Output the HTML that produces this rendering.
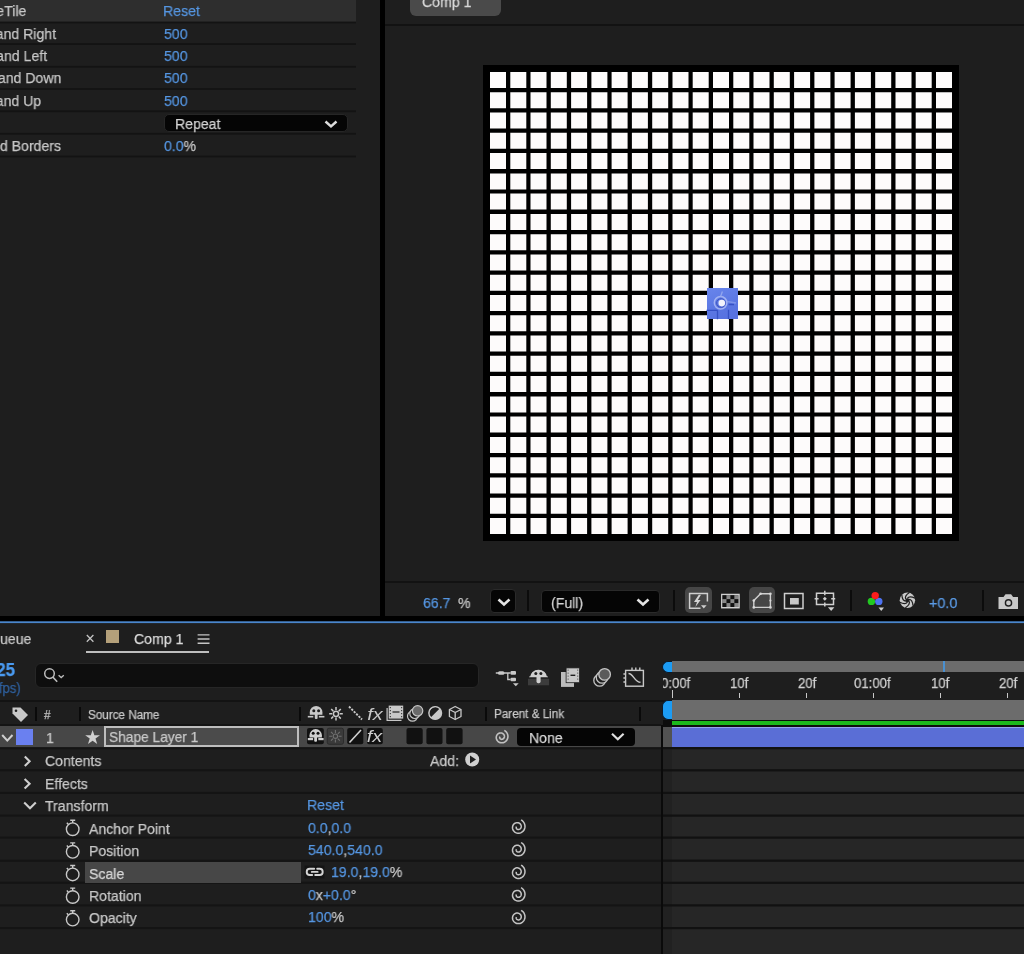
<!DOCTYPE html>
<html><head><meta charset="utf-8">
<style>
*{margin:0;padding:0;box-sizing:border-box}
html,body{width:1024px;height:954px;overflow:hidden;background:#1e1e1e;font-family:"Liberation Sans",sans-serif;color:#c8c8c8}
.a{position:absolute}
.t{position:absolute;white-space:nowrap;-webkit-text-stroke:0.25px currentColor;will-change:transform}
.b{color:#5596e2}
svg{position:absolute;overflow:visible}
</style></head><body>
<div class="a" style="left:0px;top:0px;width:356px;height:22px;background:#2e2e2e;"></div>
<svg style="left:0;top:0" width="1" height="1"><rect x="0" y="21.60" width="356" height="1.8" fill="#131313"/><rect x="0" y="43.20" width="356" height="1.8" fill="#131313"/><rect x="0" y="65.90" width="356" height="1.8" fill="#131313"/><rect x="0" y="88.10" width="356" height="1.8" fill="#131313"/><rect x="0" y="110.40" width="356" height="1.8" fill="#131313"/><rect x="0" y="132.90" width="356" height="1.8" fill="#131313"/><rect x="0" y="155.60" width="356" height="1.8" fill="#131313"/></svg>
<div class="t " style="top:3.40px;font-size:15px;line-height:15px;right:997.60px;transform-origin:100% 0;transform:scaleX(0.94);">CC RepeTile</div>
<div class="t " style="top:25.70px;font-size:15px;line-height:15px;right:968.00px;transform-origin:100% 0;transform:scaleX(0.94);">Expand Right</div>
<div class="t " style="top:47.70px;font-size:15px;line-height:15px;right:977.40px;transform-origin:100% 0;transform:scaleX(0.94);">Expand Left</div>
<div class="t " style="top:70.20px;font-size:15px;line-height:15px;right:962.90px;transform-origin:100% 0;transform:scaleX(0.94);">Expand Down</div>
<div class="t " style="top:92.70px;font-size:15px;line-height:15px;right:983.10px;transform-origin:100% 0;transform:scaleX(0.94);">Expand Up</div>
<div class="t " style="top:138.00px;font-size:15px;line-height:15px;right:962.90px;transform-origin:100% 0;transform:scaleX(0.94);">Blend Borders</div>
<div class="t " style="top:3.40px;font-size:15px;line-height:15px;left:163.30px;transform-origin:0 0;transform:scaleX(0.94);color:#5596e2;">Reset</div>
<div class="t " style="top:25.70px;font-size:15px;line-height:15px;left:164.00px;transform-origin:0 0;transform:scaleX(0.94);color:#5596e2;">500</div>
<div class="t " style="top:47.70px;font-size:15px;line-height:15px;left:164.00px;transform-origin:0 0;transform:scaleX(0.94);color:#5596e2;">500</div>
<div class="t " style="top:70.20px;font-size:15px;line-height:15px;left:164.00px;transform-origin:0 0;transform:scaleX(0.94);color:#5596e2;">500</div>
<div class="t " style="top:92.70px;font-size:15px;line-height:15px;left:164.00px;transform-origin:0 0;transform:scaleX(0.94);color:#5596e2;">500</div>
<div class="a" style="left:163.5px;top:113.7px;width:184.5px;height:18.6px;background:#050505;border:1px solid #262626;border-radius:5px"></div>
<div class="t " style="top:115.50px;font-size:15px;line-height:15px;left:174.80px;transform-origin:0 0;transform:scaleX(0.94);color:#d4d4d4;">Repeat</div>
<svg style="left:323.5px;top:119.5px" width="14" height="8"><path d="M1.5 1.5L7 6.5L12.5 1.5" fill="none" stroke="#dcdcdc" stroke-width="2.4"/></svg>
<div class="t " style="top:138.00px;font-size:15px;line-height:15px;left:164.00px;transform-origin:0 0;transform:scaleX(0.94);"><span class="b">0.0</span>%</div>
<div class="a" style="left:380px;top:0px;width:5px;height:617px;background:#000;"></div>
<div class="a" style="left:410px;top:-6px;width:91px;height:22px;background:#4a4a4a;border-radius:6px"></div>
<div class="t " style="top:-6.30px;font-size:15px;line-height:15px;left:421.70px;transform-origin:0 0;transform:scaleX(0.94);color:#d8d8d8;">Comp 1</div>
<div class="a" style="left:385px;top:24px;width:639px;height:2px;background:#121212;"></div>
<svg style="left:0;top:0" width="1024" height="954"><rect x="483" y="65" width="476" height="476" fill="#000"/><path fill="#fdfbfb" d="M490.0 72.0h16v16h-16zM510.3 72.0h16v16h-16zM530.5 72.0h16v16h-16zM550.8 72.0h16v16h-16zM571.1 72.0h16v16h-16zM591.4 72.0h16v16h-16zM611.6 72.0h16v16h-16zM631.9 72.0h16v16h-16zM652.2 72.0h16v16h-16zM672.5 72.0h16v16h-16zM692.7 72.0h16v16h-16zM713.0 72.0h16v16h-16zM733.3 72.0h16v16h-16zM753.5 72.0h16v16h-16zM773.8 72.0h16v16h-16zM794.1 72.0h16v16h-16zM814.4 72.0h16v16h-16zM834.6 72.0h16v16h-16zM854.9 72.0h16v16h-16zM875.2 72.0h16v16h-16zM895.5 72.0h16v16h-16zM915.7 72.0h16v16h-16zM936.0 72.0h16v16h-16zM490.0 92.3h16v16h-16zM510.3 92.3h16v16h-16zM530.5 92.3h16v16h-16zM550.8 92.3h16v16h-16zM571.1 92.3h16v16h-16zM591.4 92.3h16v16h-16zM611.6 92.3h16v16h-16zM631.9 92.3h16v16h-16zM652.2 92.3h16v16h-16zM672.5 92.3h16v16h-16zM692.7 92.3h16v16h-16zM713.0 92.3h16v16h-16zM733.3 92.3h16v16h-16zM753.5 92.3h16v16h-16zM773.8 92.3h16v16h-16zM794.1 92.3h16v16h-16zM814.4 92.3h16v16h-16zM834.6 92.3h16v16h-16zM854.9 92.3h16v16h-16zM875.2 92.3h16v16h-16zM895.5 92.3h16v16h-16zM915.7 92.3h16v16h-16zM936.0 92.3h16v16h-16zM490.0 112.5h16v16h-16zM510.3 112.5h16v16h-16zM530.5 112.5h16v16h-16zM550.8 112.5h16v16h-16zM571.1 112.5h16v16h-16zM591.4 112.5h16v16h-16zM611.6 112.5h16v16h-16zM631.9 112.5h16v16h-16zM652.2 112.5h16v16h-16zM672.5 112.5h16v16h-16zM692.7 112.5h16v16h-16zM713.0 112.5h16v16h-16zM733.3 112.5h16v16h-16zM753.5 112.5h16v16h-16zM773.8 112.5h16v16h-16zM794.1 112.5h16v16h-16zM814.4 112.5h16v16h-16zM834.6 112.5h16v16h-16zM854.9 112.5h16v16h-16zM875.2 112.5h16v16h-16zM895.5 112.5h16v16h-16zM915.7 112.5h16v16h-16zM936.0 112.5h16v16h-16zM490.0 132.8h16v16h-16zM510.3 132.8h16v16h-16zM530.5 132.8h16v16h-16zM550.8 132.8h16v16h-16zM571.1 132.8h16v16h-16zM591.4 132.8h16v16h-16zM611.6 132.8h16v16h-16zM631.9 132.8h16v16h-16zM652.2 132.8h16v16h-16zM672.5 132.8h16v16h-16zM692.7 132.8h16v16h-16zM713.0 132.8h16v16h-16zM733.3 132.8h16v16h-16zM753.5 132.8h16v16h-16zM773.8 132.8h16v16h-16zM794.1 132.8h16v16h-16zM814.4 132.8h16v16h-16zM834.6 132.8h16v16h-16zM854.9 132.8h16v16h-16zM875.2 132.8h16v16h-16zM895.5 132.8h16v16h-16zM915.7 132.8h16v16h-16zM936.0 132.8h16v16h-16zM490.0 153.1h16v16h-16zM510.3 153.1h16v16h-16zM530.5 153.1h16v16h-16zM550.8 153.1h16v16h-16zM571.1 153.1h16v16h-16zM591.4 153.1h16v16h-16zM611.6 153.1h16v16h-16zM631.9 153.1h16v16h-16zM652.2 153.1h16v16h-16zM672.5 153.1h16v16h-16zM692.7 153.1h16v16h-16zM713.0 153.1h16v16h-16zM733.3 153.1h16v16h-16zM753.5 153.1h16v16h-16zM773.8 153.1h16v16h-16zM794.1 153.1h16v16h-16zM814.4 153.1h16v16h-16zM834.6 153.1h16v16h-16zM854.9 153.1h16v16h-16zM875.2 153.1h16v16h-16zM895.5 153.1h16v16h-16zM915.7 153.1h16v16h-16zM936.0 153.1h16v16h-16zM490.0 173.4h16v16h-16zM510.3 173.4h16v16h-16zM530.5 173.4h16v16h-16zM550.8 173.4h16v16h-16zM571.1 173.4h16v16h-16zM591.4 173.4h16v16h-16zM611.6 173.4h16v16h-16zM631.9 173.4h16v16h-16zM652.2 173.4h16v16h-16zM672.5 173.4h16v16h-16zM692.7 173.4h16v16h-16zM713.0 173.4h16v16h-16zM733.3 173.4h16v16h-16zM753.5 173.4h16v16h-16zM773.8 173.4h16v16h-16zM794.1 173.4h16v16h-16zM814.4 173.4h16v16h-16zM834.6 173.4h16v16h-16zM854.9 173.4h16v16h-16zM875.2 173.4h16v16h-16zM895.5 173.4h16v16h-16zM915.7 173.4h16v16h-16zM936.0 173.4h16v16h-16zM490.0 193.6h16v16h-16zM510.3 193.6h16v16h-16zM530.5 193.6h16v16h-16zM550.8 193.6h16v16h-16zM571.1 193.6h16v16h-16zM591.4 193.6h16v16h-16zM611.6 193.6h16v16h-16zM631.9 193.6h16v16h-16zM652.2 193.6h16v16h-16zM672.5 193.6h16v16h-16zM692.7 193.6h16v16h-16zM713.0 193.6h16v16h-16zM733.3 193.6h16v16h-16zM753.5 193.6h16v16h-16zM773.8 193.6h16v16h-16zM794.1 193.6h16v16h-16zM814.4 193.6h16v16h-16zM834.6 193.6h16v16h-16zM854.9 193.6h16v16h-16zM875.2 193.6h16v16h-16zM895.5 193.6h16v16h-16zM915.7 193.6h16v16h-16zM936.0 193.6h16v16h-16zM490.0 213.9h16v16h-16zM510.3 213.9h16v16h-16zM530.5 213.9h16v16h-16zM550.8 213.9h16v16h-16zM571.1 213.9h16v16h-16zM591.4 213.9h16v16h-16zM611.6 213.9h16v16h-16zM631.9 213.9h16v16h-16zM652.2 213.9h16v16h-16zM672.5 213.9h16v16h-16zM692.7 213.9h16v16h-16zM713.0 213.9h16v16h-16zM733.3 213.9h16v16h-16zM753.5 213.9h16v16h-16zM773.8 213.9h16v16h-16zM794.1 213.9h16v16h-16zM814.4 213.9h16v16h-16zM834.6 213.9h16v16h-16zM854.9 213.9h16v16h-16zM875.2 213.9h16v16h-16zM895.5 213.9h16v16h-16zM915.7 213.9h16v16h-16zM936.0 213.9h16v16h-16zM490.0 234.2h16v16h-16zM510.3 234.2h16v16h-16zM530.5 234.2h16v16h-16zM550.8 234.2h16v16h-16zM571.1 234.2h16v16h-16zM591.4 234.2h16v16h-16zM611.6 234.2h16v16h-16zM631.9 234.2h16v16h-16zM652.2 234.2h16v16h-16zM672.5 234.2h16v16h-16zM692.7 234.2h16v16h-16zM713.0 234.2h16v16h-16zM733.3 234.2h16v16h-16zM753.5 234.2h16v16h-16zM773.8 234.2h16v16h-16zM794.1 234.2h16v16h-16zM814.4 234.2h16v16h-16zM834.6 234.2h16v16h-16zM854.9 234.2h16v16h-16zM875.2 234.2h16v16h-16zM895.5 234.2h16v16h-16zM915.7 234.2h16v16h-16zM936.0 234.2h16v16h-16zM490.0 254.5h16v16h-16zM510.3 254.5h16v16h-16zM530.5 254.5h16v16h-16zM550.8 254.5h16v16h-16zM571.1 254.5h16v16h-16zM591.4 254.5h16v16h-16zM611.6 254.5h16v16h-16zM631.9 254.5h16v16h-16zM652.2 254.5h16v16h-16zM672.5 254.5h16v16h-16zM692.7 254.5h16v16h-16zM713.0 254.5h16v16h-16zM733.3 254.5h16v16h-16zM753.5 254.5h16v16h-16zM773.8 254.5h16v16h-16zM794.1 254.5h16v16h-16zM814.4 254.5h16v16h-16zM834.6 254.5h16v16h-16zM854.9 254.5h16v16h-16zM875.2 254.5h16v16h-16zM895.5 254.5h16v16h-16zM915.7 254.5h16v16h-16zM936.0 254.5h16v16h-16zM490.0 274.7h16v16h-16zM510.3 274.7h16v16h-16zM530.5 274.7h16v16h-16zM550.8 274.7h16v16h-16zM571.1 274.7h16v16h-16zM591.4 274.7h16v16h-16zM611.6 274.7h16v16h-16zM631.9 274.7h16v16h-16zM652.2 274.7h16v16h-16zM672.5 274.7h16v16h-16zM692.7 274.7h16v16h-16zM713.0 274.7h16v16h-16zM733.3 274.7h16v16h-16zM753.5 274.7h16v16h-16zM773.8 274.7h16v16h-16zM794.1 274.7h16v16h-16zM814.4 274.7h16v16h-16zM834.6 274.7h16v16h-16zM854.9 274.7h16v16h-16zM875.2 274.7h16v16h-16zM895.5 274.7h16v16h-16zM915.7 274.7h16v16h-16zM936.0 274.7h16v16h-16zM490.0 295.0h16v16h-16zM510.3 295.0h16v16h-16zM530.5 295.0h16v16h-16zM550.8 295.0h16v16h-16zM571.1 295.0h16v16h-16zM591.4 295.0h16v16h-16zM611.6 295.0h16v16h-16zM631.9 295.0h16v16h-16zM652.2 295.0h16v16h-16zM672.5 295.0h16v16h-16zM692.7 295.0h16v16h-16zM713.0 295.0h16v16h-16zM733.3 295.0h16v16h-16zM753.5 295.0h16v16h-16zM773.8 295.0h16v16h-16zM794.1 295.0h16v16h-16zM814.4 295.0h16v16h-16zM834.6 295.0h16v16h-16zM854.9 295.0h16v16h-16zM875.2 295.0h16v16h-16zM895.5 295.0h16v16h-16zM915.7 295.0h16v16h-16zM936.0 295.0h16v16h-16zM490.0 315.3h16v16h-16zM510.3 315.3h16v16h-16zM530.5 315.3h16v16h-16zM550.8 315.3h16v16h-16zM571.1 315.3h16v16h-16zM591.4 315.3h16v16h-16zM611.6 315.3h16v16h-16zM631.9 315.3h16v16h-16zM652.2 315.3h16v16h-16zM672.5 315.3h16v16h-16zM692.7 315.3h16v16h-16zM713.0 315.3h16v16h-16zM733.3 315.3h16v16h-16zM753.5 315.3h16v16h-16zM773.8 315.3h16v16h-16zM794.1 315.3h16v16h-16zM814.4 315.3h16v16h-16zM834.6 315.3h16v16h-16zM854.9 315.3h16v16h-16zM875.2 315.3h16v16h-16zM895.5 315.3h16v16h-16zM915.7 315.3h16v16h-16zM936.0 315.3h16v16h-16zM490.0 335.5h16v16h-16zM510.3 335.5h16v16h-16zM530.5 335.5h16v16h-16zM550.8 335.5h16v16h-16zM571.1 335.5h16v16h-16zM591.4 335.5h16v16h-16zM611.6 335.5h16v16h-16zM631.9 335.5h16v16h-16zM652.2 335.5h16v16h-16zM672.5 335.5h16v16h-16zM692.7 335.5h16v16h-16zM713.0 335.5h16v16h-16zM733.3 335.5h16v16h-16zM753.5 335.5h16v16h-16zM773.8 335.5h16v16h-16zM794.1 335.5h16v16h-16zM814.4 335.5h16v16h-16zM834.6 335.5h16v16h-16zM854.9 335.5h16v16h-16zM875.2 335.5h16v16h-16zM895.5 335.5h16v16h-16zM915.7 335.5h16v16h-16zM936.0 335.5h16v16h-16zM490.0 355.8h16v16h-16zM510.3 355.8h16v16h-16zM530.5 355.8h16v16h-16zM550.8 355.8h16v16h-16zM571.1 355.8h16v16h-16zM591.4 355.8h16v16h-16zM611.6 355.8h16v16h-16zM631.9 355.8h16v16h-16zM652.2 355.8h16v16h-16zM672.5 355.8h16v16h-16zM692.7 355.8h16v16h-16zM713.0 355.8h16v16h-16zM733.3 355.8h16v16h-16zM753.5 355.8h16v16h-16zM773.8 355.8h16v16h-16zM794.1 355.8h16v16h-16zM814.4 355.8h16v16h-16zM834.6 355.8h16v16h-16zM854.9 355.8h16v16h-16zM875.2 355.8h16v16h-16zM895.5 355.8h16v16h-16zM915.7 355.8h16v16h-16zM936.0 355.8h16v16h-16zM490.0 376.1h16v16h-16zM510.3 376.1h16v16h-16zM530.5 376.1h16v16h-16zM550.8 376.1h16v16h-16zM571.1 376.1h16v16h-16zM591.4 376.1h16v16h-16zM611.6 376.1h16v16h-16zM631.9 376.1h16v16h-16zM652.2 376.1h16v16h-16zM672.5 376.1h16v16h-16zM692.7 376.1h16v16h-16zM713.0 376.1h16v16h-16zM733.3 376.1h16v16h-16zM753.5 376.1h16v16h-16zM773.8 376.1h16v16h-16zM794.1 376.1h16v16h-16zM814.4 376.1h16v16h-16zM834.6 376.1h16v16h-16zM854.9 376.1h16v16h-16zM875.2 376.1h16v16h-16zM895.5 376.1h16v16h-16zM915.7 376.1h16v16h-16zM936.0 376.1h16v16h-16zM490.0 396.4h16v16h-16zM510.3 396.4h16v16h-16zM530.5 396.4h16v16h-16zM550.8 396.4h16v16h-16zM571.1 396.4h16v16h-16zM591.4 396.4h16v16h-16zM611.6 396.4h16v16h-16zM631.9 396.4h16v16h-16zM652.2 396.4h16v16h-16zM672.5 396.4h16v16h-16zM692.7 396.4h16v16h-16zM713.0 396.4h16v16h-16zM733.3 396.4h16v16h-16zM753.5 396.4h16v16h-16zM773.8 396.4h16v16h-16zM794.1 396.4h16v16h-16zM814.4 396.4h16v16h-16zM834.6 396.4h16v16h-16zM854.9 396.4h16v16h-16zM875.2 396.4h16v16h-16zM895.5 396.4h16v16h-16zM915.7 396.4h16v16h-16zM936.0 396.4h16v16h-16zM490.0 416.6h16v16h-16zM510.3 416.6h16v16h-16zM530.5 416.6h16v16h-16zM550.8 416.6h16v16h-16zM571.1 416.6h16v16h-16zM591.4 416.6h16v16h-16zM611.6 416.6h16v16h-16zM631.9 416.6h16v16h-16zM652.2 416.6h16v16h-16zM672.5 416.6h16v16h-16zM692.7 416.6h16v16h-16zM713.0 416.6h16v16h-16zM733.3 416.6h16v16h-16zM753.5 416.6h16v16h-16zM773.8 416.6h16v16h-16zM794.1 416.6h16v16h-16zM814.4 416.6h16v16h-16zM834.6 416.6h16v16h-16zM854.9 416.6h16v16h-16zM875.2 416.6h16v16h-16zM895.5 416.6h16v16h-16zM915.7 416.6h16v16h-16zM936.0 416.6h16v16h-16zM490.0 436.9h16v16h-16zM510.3 436.9h16v16h-16zM530.5 436.9h16v16h-16zM550.8 436.9h16v16h-16zM571.1 436.9h16v16h-16zM591.4 436.9h16v16h-16zM611.6 436.9h16v16h-16zM631.9 436.9h16v16h-16zM652.2 436.9h16v16h-16zM672.5 436.9h16v16h-16zM692.7 436.9h16v16h-16zM713.0 436.9h16v16h-16zM733.3 436.9h16v16h-16zM753.5 436.9h16v16h-16zM773.8 436.9h16v16h-16zM794.1 436.9h16v16h-16zM814.4 436.9h16v16h-16zM834.6 436.9h16v16h-16zM854.9 436.9h16v16h-16zM875.2 436.9h16v16h-16zM895.5 436.9h16v16h-16zM915.7 436.9h16v16h-16zM936.0 436.9h16v16h-16zM490.0 457.2h16v16h-16zM510.3 457.2h16v16h-16zM530.5 457.2h16v16h-16zM550.8 457.2h16v16h-16zM571.1 457.2h16v16h-16zM591.4 457.2h16v16h-16zM611.6 457.2h16v16h-16zM631.9 457.2h16v16h-16zM652.2 457.2h16v16h-16zM672.5 457.2h16v16h-16zM692.7 457.2h16v16h-16zM713.0 457.2h16v16h-16zM733.3 457.2h16v16h-16zM753.5 457.2h16v16h-16zM773.8 457.2h16v16h-16zM794.1 457.2h16v16h-16zM814.4 457.2h16v16h-16zM834.6 457.2h16v16h-16zM854.9 457.2h16v16h-16zM875.2 457.2h16v16h-16zM895.5 457.2h16v16h-16zM915.7 457.2h16v16h-16zM936.0 457.2h16v16h-16zM490.0 477.5h16v16h-16zM510.3 477.5h16v16h-16zM530.5 477.5h16v16h-16zM550.8 477.5h16v16h-16zM571.1 477.5h16v16h-16zM591.4 477.5h16v16h-16zM611.6 477.5h16v16h-16zM631.9 477.5h16v16h-16zM652.2 477.5h16v16h-16zM672.5 477.5h16v16h-16zM692.7 477.5h16v16h-16zM713.0 477.5h16v16h-16zM733.3 477.5h16v16h-16zM753.5 477.5h16v16h-16zM773.8 477.5h16v16h-16zM794.1 477.5h16v16h-16zM814.4 477.5h16v16h-16zM834.6 477.5h16v16h-16zM854.9 477.5h16v16h-16zM875.2 477.5h16v16h-16zM895.5 477.5h16v16h-16zM915.7 477.5h16v16h-16zM936.0 477.5h16v16h-16zM490.0 497.7h16v16h-16zM510.3 497.7h16v16h-16zM530.5 497.7h16v16h-16zM550.8 497.7h16v16h-16zM571.1 497.7h16v16h-16zM591.4 497.7h16v16h-16zM611.6 497.7h16v16h-16zM631.9 497.7h16v16h-16zM652.2 497.7h16v16h-16zM672.5 497.7h16v16h-16zM692.7 497.7h16v16h-16zM713.0 497.7h16v16h-16zM733.3 497.7h16v16h-16zM753.5 497.7h16v16h-16zM773.8 497.7h16v16h-16zM794.1 497.7h16v16h-16zM814.4 497.7h16v16h-16zM834.6 497.7h16v16h-16zM854.9 497.7h16v16h-16zM875.2 497.7h16v16h-16zM895.5 497.7h16v16h-16zM915.7 497.7h16v16h-16zM936.0 497.7h16v16h-16zM490.0 518.0h16v16h-16zM510.3 518.0h16v16h-16zM530.5 518.0h16v16h-16zM550.8 518.0h16v16h-16zM571.1 518.0h16v16h-16zM591.4 518.0h16v16h-16zM611.6 518.0h16v16h-16zM631.9 518.0h16v16h-16zM652.2 518.0h16v16h-16zM672.5 518.0h16v16h-16zM692.7 518.0h16v16h-16zM713.0 518.0h16v16h-16zM733.3 518.0h16v16h-16zM753.5 518.0h16v16h-16zM773.8 518.0h16v16h-16zM794.1 518.0h16v16h-16zM814.4 518.0h16v16h-16zM834.6 518.0h16v16h-16zM854.9 518.0h16v16h-16zM875.2 518.0h16v16h-16zM895.5 518.0h16v16h-16zM915.7 518.0h16v16h-16zM936.0 518.0h16v16h-16z"/></svg>
<div class="a" style="left:706.5px;top:288.3px;width:31.1px;height:30.9px;background:linear-gradient(160deg,#6885ec,#5a76e2 60%,#5670e0);"></div>
<div class="a" style="left:385px;top:581px;width:639px;height:2px;background:#121212;"></div>
<div class="a" style="left:0px;top:616px;width:1024px;height:6px;background:#000;"></div>
<svg style="left:0;top:0" width="1" height="1"><rect x="0" y="621.3" width="1024" height="1.8" fill="#4a86cc"/></svg>
<div class="t " style="top:594.90px;font-size:15px;line-height:15px;left:423.00px;transform-origin:0 0;transform:scaleX(0.94);color:#5596e2;">66.7</div>
<div class="t " style="top:594.90px;font-size:15px;line-height:15px;left:457.50px;transform-origin:0 0;transform:scaleX(0.94);">%</div>
<div class="a" style="left:490px;top:589px;width:26px;height:24px;background:#050505;border:1px solid #2a2a2a;border-radius:4px"></div>
<svg style="left:496.5px;top:597.5px" width="14" height="8"><path d="M1.5 1.5L7 6.5L12.5 1.5" fill="none" stroke="#e4e4e4" stroke-width="2.6"/></svg>
<div class="a" style="left:527px;top:590px;width:2px;height:21px;background:#0c0c0c;"></div>
<div class="a" style="left:541px;top:589.5px;width:119px;height:23.5px;background:#050505;border:1px solid #2a2a2a;border-radius:4px"></div>
<div class="t " style="top:594.60px;font-size:15px;line-height:15px;left:551.00px;transform-origin:0 0;transform:scaleX(0.94);color:#d4d4d4;">(Full)</div>
<svg style="left:636px;top:597.5px" width="14" height="8"><path d="M1.5 1.5L7 6.5L12.5 1.5" fill="none" stroke="#e4e4e4" stroke-width="2.6"/></svg>
<div class="a" style="left:673px;top:590px;width:2px;height:21px;background:#0c0c0c;"></div>
<div class="a" style="left:685.4px;top:587.4px;width:26.4px;height:26px;background:#464646;border-radius:5px"></div>
<div class="a" style="left:749.4px;top:587.4px;width:25.4px;height:26px;background:#464646;border-radius:5px"></div>
<div class="a" style="left:850px;top:590px;width:2px;height:21px;background:#0c0c0c;"></div>
<div class="t " style="top:594.90px;font-size:15px;line-height:15px;left:929.00px;transform-origin:0 0;transform:scaleX(0.96);color:#5b9be6;">+0.0</div>
<div class="a" style="left:982px;top:590px;width:2px;height:21px;background:#0c0c0c;"></div>
<div class="t " style="top:631.30px;font-size:15px;line-height:15px;right:992.60px;transform-origin:100% 0;transform:scaleX(0.94);">Render Queue</div>
<div class="t " style="top:631.30px;font-size:15px;line-height:15px;left:133.60px;transform-origin:0 0;transform:scaleX(0.94);color:#dadada;">Comp 1</div>
<div class="a" style="left:105.7px;top:630px;width:13.5px;height:13px;background:#b4a07a;"></div>
<div class="a" style="left:86px;top:651px;width:123px;height:2px;background:#bebebe;"></div>
<div class="t " style="top:660.96px;font-size:18px;line-height:18px;right:1008.50px;transform-origin:100% 0;transform:scaleX(0.94);color:#4a9af0;font-weight:bold;">0:00:01:25</div>
<div class="t " style="top:680.75px;font-size:14px;line-height:14px;right:1003.50px;transform-origin:100% 0;transform:scaleX(0.94);color:#2f609e;">00025 (25.00 fps)</div>
<div class="a" style="left:35.4px;top:663.2px;width:443.2px;height:24.8px;background:#0e0e0e;border:1px solid #262626;border-radius:6px"></div>
<div class="a" style="left:0px;top:699.5px;width:1024px;height:2px;background:#131313;"></div>
<div class="a" style="left:35px;top:707px;width:2px;height:13.5px;background:#0a0a0a;"></div>
<div class="a" style="left:79px;top:707px;width:2px;height:13.5px;background:#0a0a0a;"></div>
<div class="a" style="left:299.3px;top:707px;width:2px;height:13.5px;background:#0a0a0a;"></div>
<div class="a" style="left:484.6px;top:707px;width:2px;height:13.5px;background:#0a0a0a;"></div>
<div class="a" style="left:639px;top:707px;width:2px;height:13.5px;background:#0a0a0a;"></div>
<div class="t " style="top:708.59px;font-size:12.3px;line-height:12.3px;left:43.70px;transform-origin:0 0;transform:scaleX(0.95);">#</div>
<div class="t " style="top:708.59px;font-size:12.3px;line-height:12.3px;left:87.50px;transform-origin:0 0;transform:scaleX(0.95);">Source Name</div>
<div class="t " style="top:708.39px;font-size:12.3px;line-height:12.3px;left:493.80px;transform-origin:0 0;transform:scaleX(0.95);">Parent &amp; Link</div>
<div class="a" style="left:0px;top:726px;width:661px;height:21.5px;background:#474747;"></div>
<div class="a" style="left:16.4px;top:728.5px;width:16.7px;height:16.7px;background:#6a80f0;"></div>
<div class="t " style="top:729.60px;font-size:15px;line-height:15px;left:45.70px;transform-origin:0 0;transform:scaleX(0.94);">1</div>
<div class="a" style="left:104.3px;top:726.3px;width:195px;height:21px;background:#4b4b4b;border:2px solid #bdbdbd"></div>
<div class="t " style="top:729.20px;font-size:15px;line-height:15px;left:108.60px;transform-origin:0 0;transform:scaleX(0.915);">Shape Layer 1</div>
<div class="a" style="left:516.9px;top:727.8px;width:118px;height:18.5px;background:#050505;border-radius:4px"></div>
<div class="t " style="top:730.20px;font-size:15px;line-height:15px;left:528.60px;transform-origin:0 0;transform:scaleX(0.94);color:#d8d8d8;">None</div>
<svg style="left:0;top:0" width="1" height="1"><rect x="0" y="747.10" width="1024" height="2.2" fill="#141414"/><rect x="0" y="769.20" width="1024" height="2.2" fill="#141414"/><rect x="0" y="791.80" width="1024" height="2.2" fill="#141414"/><rect x="0" y="814.50" width="1024" height="2.2" fill="#141414"/><rect x="0" y="836.50" width="1024" height="2.2" fill="#141414"/><rect x="0" y="859.60" width="1024" height="2.2" fill="#141414"/><rect x="0" y="881.70" width="1024" height="2.2" fill="#141414"/><rect x="0" y="904.30" width="1024" height="2.2" fill="#141414"/><rect x="0" y="927.00" width="1024" height="2.2" fill="#141414"/></svg>
<div class="a" style="left:84.7px;top:861.5px;width:216.3px;height:21.2px;background:#474747;"></div>
<div class="t " style="top:753.30px;font-size:15px;line-height:15px;left:45.40px;transform-origin:0 0;transform:scaleX(0.94);">Contents</div>
<div class="t " style="top:775.90px;font-size:15px;line-height:15px;left:45.40px;transform-origin:0 0;transform:scaleX(0.94);">Effects</div>
<div class="t " style="top:798.20px;font-size:15px;line-height:15px;left:45.40px;transform-origin:0 0;transform:scaleX(0.94);">Transform</div>
<div class="t " style="top:820.90px;font-size:15px;line-height:15px;left:88.60px;transform-origin:0 0;transform:scaleX(0.94);">Anchor Point</div>
<div class="t " style="top:843.20px;font-size:15px;line-height:15px;left:88.60px;transform-origin:0 0;transform:scaleX(0.94);">Position</div>
<div class="t " style="top:865.60px;font-size:15px;line-height:15px;left:88.60px;transform-origin:0 0;transform:scaleX(0.94);color:#d8d8d8;">Scale</div>
<div class="t " style="top:888.00px;font-size:15px;line-height:15px;left:88.60px;transform-origin:0 0;transform:scaleX(0.94);">Rotation</div>
<div class="t " style="top:910.40px;font-size:15px;line-height:15px;left:88.60px;transform-origin:0 0;transform:scaleX(0.94);">Opacity</div>
<div class="t " style="top:753.30px;font-size:15px;line-height:15px;left:430.40px;transform-origin:0 0;transform:scaleX(0.94);">Add:</div>
<div class="t " style="top:797.10px;font-size:15px;line-height:15px;left:307.30px;transform-origin:0 0;transform:scaleX(0.94);color:#5596e2;">Reset</div>
<div class="t " style="top:819.60px;font-size:15px;line-height:15px;left:307.80px;transform-origin:0 0;transform:scaleX(0.94);"><span class="b">0.0</span>,<span class="b">0.0</span></div>
<div class="t " style="top:842.00px;font-size:15px;line-height:15px;left:307.80px;transform-origin:0 0;transform:scaleX(0.94);"><span class="b">540.0</span>,<span class="b">540.0</span></div>
<div class="t " style="top:864.40px;font-size:15px;line-height:15px;left:330.80px;transform-origin:0 0;transform:scaleX(0.94);"><span class="b">19.0</span>,<span class="b">19.0</span>%</div>
<div class="t " style="top:886.80px;font-size:15px;line-height:15px;left:307.80px;transform-origin:0 0;transform:scaleX(0.94);"><span class="b">0</span>x<span class="b">+0.0</span>°</div>
<div class="t " style="top:909.20px;font-size:15px;line-height:15px;left:307.80px;transform-origin:0 0;transform:scaleX(0.94);"><span class="b">100</span>%</div>
<div class="a" style="left:661px;top:725px;width:2px;height:229px;background:#0a0a0a;"></div>
<div class="a" style="left:0px;top:724.4px;width:661px;height:1.8px;background:#141414;"></div>
<div class="a" style="left:671.4px;top:661px;width:352.6px;height:11.3px;background:#6c6c6c;"></div>
<div class="a" style="left:662.3px;top:660.6px;width:9.4px;height:12.1px;background:#1c9cf4;border-radius:6px 0 0 6px;border:1px solid #0c1a2a;border-right:none"></div>
<div class="a" style="left:943px;top:661px;width:2px;height:11.3px;background:#4a90d0;"></div>
<div class="a" style="left:671.4px;top:700px;width:352.6px;height:19.7px;background:#6c6c6c;"></div>
<div class="a" style="left:662.3px;top:699.6px;width:9.4px;height:20.5px;background:#1c9cf4;border-radius:6px 0 0 6px;border:1px solid #0c1a2a;border-right:none"></div>
<div class="a" style="left:663px;top:719.7px;width:361px;height:7px;background:#0d0d0d;"></div>
<div class="a" style="left:672px;top:721px;width:352px;height:4px;background:#1cb81c;"></div>
<div class="a" style="left:663px;top:726.8px;width:9px;height:20.5px;background:#525252;"></div>
<div class="a" style="left:672.2px;top:726.8px;width:352px;height:20.5px;background:#5a6ed6;border-top:1px solid #95a5ea"></div>
<div class="a" style="left:663px;top:747.3px;width:9px;height:207px;background:#212121;"></div>
<div class="a" style="left:672.2px;top:747.3px;width:352px;height:207px;background:#262626;"></div>
<svg style="left:0;top:0" width="1" height="1"><rect x="663" y="747.10" width="361" height="2.2" fill="#111"/><rect x="663" y="769.20" width="361" height="2.2" fill="#111"/><rect x="663" y="791.80" width="361" height="2.2" fill="#111"/><rect x="663" y="814.50" width="361" height="2.2" fill="#111"/><rect x="663" y="836.50" width="361" height="2.2" fill="#111"/><rect x="663" y="859.60" width="361" height="2.2" fill="#111"/><rect x="663" y="881.70" width="361" height="2.2" fill="#111"/><rect x="663" y="904.30" width="361" height="2.2" fill="#111"/><rect x="663" y="927.00" width="361" height="2.2" fill="#111"/></svg>
<div class="a" style="left:662.8px;top:672px;width:361.2px;height:18px;overflow:hidden">
<div class="t" style="left:-2.2px;top:4.25px;font-size:14px;line-height:14px;transform-origin:0 0;transform:scaleX(0.94);color:#d0d0d0">0:00f</div>
<div class="t" style="left:67.4px;top:4.25px;font-size:14px;line-height:14px;transform-origin:0 0;transform:scaleX(0.94);color:#d0d0d0">10f</div>
<div class="t" style="left:135.2px;top:4.25px;font-size:14px;line-height:14px;transform-origin:0 0;transform:scaleX(0.94);color:#d0d0d0">20f</div>
<div class="t" style="left:191.7px;top:4.25px;font-size:14px;line-height:14px;transform-origin:0 0;transform:scaleX(0.94);color:#d0d0d0">01:00f</div>
<div class="t" style="left:268.2px;top:4.25px;font-size:14px;line-height:14px;transform-origin:0 0;transform:scaleX(0.94);color:#d0d0d0">10f</div>
<div class="t" style="left:336px;top:4.25px;font-size:14px;line-height:14px;transform-origin:0 0;transform:scaleX(0.94);color:#d0d0d0">20f</div>
</div>
<div class="a" style="left:672.3px;top:689.8px;width:1px;height:8.2px;background:#c8c8c8;"></div>
<div class="a" style="left:739.3px;top:692.5px;width:1px;height:5.5px;background:#c8c8c8;"></div>
<div class="a" style="left:806.4px;top:692.5px;width:1px;height:5.5px;background:#c8c8c8;"></div>
<div class="a" style="left:873.4px;top:692.5px;width:1px;height:5.5px;background:#c8c8c8;"></div>
<div class="a" style="left:940.4px;top:692.5px;width:1px;height:5.5px;background:#c8c8c8;"></div>
<div class="a" style="left:1007.4px;top:692.5px;width:1px;height:5.5px;background:#c8c8c8;"></div>
<!-- ===== ICONS ===== -->
<!-- layer handle detail -->
<svg style="left:0;top:0" width="1" height="1">
<path d="M706.5 310.3H717.5M717.5 310.3V319.2M728.5 309.8V319.2M728.5 304.5H734" stroke="#3550c4" stroke-width="1.3" fill="none"/>
<path d="M727 301.5L736 303" stroke="#8ea2ee" stroke-width="1.6" opacity="0.7"/>
<circle cx="720.6" cy="302.8" r="6.3" fill="none" stroke="#a3b3f2" stroke-width="1.5"/>
<circle cx="720.9" cy="303" r="4.3" fill="none" stroke="#4258c0" stroke-width="1"/>
<circle cx="721.8" cy="303.1" r="3.3" fill="#f2f3fb"/>
<path d="M720.6 296.5L722.4 291.5" stroke="#93a6ee" stroke-width="1.3"/>
</svg>

<!-- toolbar icons -->
<svg style="left:0;top:0" width="1" height="1">
<g fill="none" stroke="#cfcfcf" stroke-width="1.5">
<path d="M700.5 608.2H689.6V593.6H707.4V601.6"/>
<path d="M698.8 594.8H701L697.8 600.1H700.6L695.4 607L697 601.9H694Z" fill="#d4d4d4" stroke="none"/>
<rect x="721.8" y="594.5" width="17.2" height="13.2"/>
<rect x="784.5" y="593.5" width="18.5" height="15"/>
<path d="M753.8 600.6L760.6 593.8H770.4V607.4H753.8Z" stroke-width="1.4"/>
<path d="M816.5 593.2H833.5V604.5H816.5Z M824.8 590.8V595.2 M824.8 602.5V606.5 M814.6 598.8H818.6 M831.2 598.8H835.2"/>
</g>
<path d="M701 605.3H706.6L703.8 608.5Z" fill="#cfcfcf"/>
<g fill="#888"><rect x="722.5" y="595.2" width="15.8" height="11.8"/></g>
<g fill="#111">
<rect x="722.5" y="595.2" width="3.95" height="3.93"/><rect x="730.4" y="595.2" width="3.95" height="3.93"/>
<rect x="726.45" y="599.13" width="3.95" height="3.93"/><rect x="734.35" y="599.13" width="3.95" height="3.93"/>
<rect x="722.5" y="603.06" width="3.95" height="3.93"/><rect x="730.4" y="603.06" width="3.95" height="3.93"/>
</g>
<g fill="#d8d8d8"><circle cx="753.8" cy="600.6" r="1.3"/><circle cx="760.6" cy="593.8" r="1.3"/><circle cx="770.4" cy="593.8" r="1.3"/><circle cx="770.4" cy="607.4" r="1.3"/><circle cx="753.8" cy="607.4" r="1.3"/><circle cx="770.4" cy="600.6" r="1.1"/></g>
<rect x="790" y="598" width="8.8" height="6.5" fill="#c8c8c8"/>
<path d="M827.9 607.2H834.4L831.15 611Z" fill="#cfcfcf"/><path d="M824.8 596.8L826.8 598.8L824.8 600.8L822.8 598.8Z" fill="#cfcfcf"/>
<circle cx="871.4" cy="601.4" r="3.7" fill="#22c822"/>
<circle cx="878.8" cy="601.4" r="3.7" fill="#4d72f2"/>
<circle cx="875.2" cy="595.6" r="3.7" fill="#fa1c1c"/>
<path d="M878.5 607.5H884L881.25 611Z" fill="#cfcfcf"/>
<g transform="translate(907.4 600.2)">
<circle r="7.7" fill="#c8c8c8"/>
<circle r="2" fill="#1e1e1e"/>
<path d="M0.00 -1.80Q1.78 -4.89 7.63 -2.04 M1.56 -0.90Q5.12 -0.90 5.59 5.59 M1.56 0.90Q3.34 3.98 -2.04 7.63 M0.00 1.80Q-1.78 4.89 -7.63 2.04 M-1.56 0.90Q-5.12 0.90 -5.59 -5.59 M-1.56 -0.90Q-3.34 -3.98 2.04 -7.63" stroke="#1e1e1e" stroke-width="1.2" fill="none"/>
</g>
<g transform="translate(998.5 594.3)">
<path d="M0 2.6H5L7 0H12.6L14.6 2.6H19.5V14.6H0Z" fill="#c8c8c8"/>
<circle cx="10" cy="8.6" r="3.1" fill="none" stroke="#1e1e1e" stroke-width="1.4"/>
</g>
</svg>

<!-- timeline tab icons -->
<svg style="left:0;top:0" width="1" height="1">
<path d="M86.8 635L93.4 641.8M93.4 635L86.8 641.8" stroke="#c4c4c4" stroke-width="1.25"/>
<path d="M197.6 634.8H209.5M197.6 639H209.5M197.6 643.2H209.5" stroke="#c4c4c4" stroke-width="1.35"/>
<circle cx="49.5" cy="673.6" r="4.8" fill="none" stroke="#bdbdbd" stroke-width="1.5"/>
<path d="M52.8 677L57.2 681.8" stroke="#bdbdbd" stroke-width="1.6"/>
<path d="M58.6 675.2L61.2 677.6L63.8 675.2" fill="none" stroke="#bdbdbd" stroke-width="1.3"/>
</svg>

<!-- timeline toolbar icons -->
<svg style="left:0;top:0" width="1" height="1">
<g fill="#c8c8c8">
<rect x="498" y="671.3" width="6.4" height="3.4" rx="1.5"/>
<rect x="510.5" y="671" width="5.5" height="3.7" rx="1"/>
<rect x="510.5" y="677.8" width="5.5" height="3.4" rx="1"/>
<path d="M512.9 683.2H518.7L515.8 686.3Z"/>
</g>
<path d="M495.8 673H510.5M507.8 673V679.5H510.5" stroke="#c8c8c8" stroke-width="1.3" fill="none"/>
<rect x="528" y="678.8" width="21.1" height="6.5" fill="#3c3c3c"/>
<path d="M529 677.2L530.2 675.4V677A8.3 7.2 0 0 1 546.8 676.8V675.4L548.1 677.2Z" fill="#cfcfcf"/><path d="M530.4 677A8.2 8 0 0 1 546.6 677Z" fill="#cfcfcf"/>
<rect x="536.5" y="675" width="4.1" height="8.2" rx="1.8" fill="#cfcfcf"/>
<circle cx="535.8" cy="673.4" r="1.5" fill="#1e1e1e"/><circle cx="540.9" cy="673.4" r="1.5" fill="#1e1e1e"/>
<rect x="561" y="672" width="13" height="14.9" fill="#bdbdbd"/>
<rect x="566.1" y="667.9" width="13.5" height="14.8" fill="#c8c8c8" stroke="#1e1e1e" stroke-width="0.8"/>
<path d="M570.5 675.3H575.3" stroke="#1e1e1e" stroke-width="1.4"/>
<g fill="#777"><rect x="567.5" y="669.5" width="1.3" height="1.3"/><rect x="567.5" y="672.5" width="1.3" height="1.3"/><rect x="567.5" y="675.5" width="1.3" height="1.3"/><rect x="567.5" y="678.5" width="1.3" height="1.3"/><rect x="577" y="669.5" width="1.3" height="1.3"/><rect x="577" y="672.5" width="1.3" height="1.3"/><rect x="577" y="675.5" width="1.3" height="1.3"/><rect x="577" y="678.5" width="1.3" height="1.3"/></g>
<g stroke="#c4c4c4" stroke-width="1.3">
<circle cx="599.6" cy="680.4" r="5.8" fill="#1e1e1e"/>
<circle cx="602.1" cy="677.4" r="5.8" fill="#1e1e1e"/>
<circle cx="604.6" cy="674.4" r="5.8" fill="#5a5a5a"/>
</g>
<g fill="none" stroke="#c8c8c8" stroke-width="1.4">
<rect x="625.6" y="670.4" width="17.8" height="15.8"/>
<path d="M632 670.4V667.5M635.8 670.4V667.5M639.8 670.4V667.5M625.6 674H623.4M625.6 678H623.4M625.6 682H623.4"/>
<path d="M628.5 673.5C633.5 673.5 634.5 682.3 640.5 682.3"/>
</g>
</svg>

<!-- column header icons -->
<svg style="left:0;top:0" width="1" height="1">
<path d="M12.5 707.5H20.5L28 715L21 722L12.5 713.5Z" fill="#c8c8c8"/>
<circle cx="16" cy="710.8" r="1.3" fill="#1e1e1e"/>
<g fill="#c8c8c8">
<path d="M309.8 714.8V712.3A6.3 6.3 0 0 1 322.4 712.3V714.8Z"/>
<rect x="314.8" y="713" width="2.8" height="6" rx="1"/>
<rect x="307.8" y="715.9" width="5.5" height="1.6"/><rect x="318.9" y="715.9" width="5.5" height="1.6"/>
</g>
<circle cx="313.8" cy="710.8" r="1.5" fill="#1e1e1e"/><circle cx="318.6" cy="710.8" r="1.5" fill="#1e1e1e"/>
<g stroke="#c8c8c8" stroke-width="1.5" fill="none">
<circle cx="336" cy="713.8" r="2.6"/>
<path d="M336 707V710M336 717.6V720.6M329.2 713.8H332.2M339.8 713.8H342.8M331.2 709L333.3 711.1M338.7 716.5L340.8 718.6M340.8 709L338.7 711.1M333.3 716.5L331.2 718.6"/>
</g>
<g stroke="#c8c8c8" fill="none">
<path d="M349 706.5L362 719.5" stroke-dasharray="2.2 1.2" stroke-width="1.9"/>
</g>
<text x="367.2" y="719.5" font-family="Liberation Sans" font-style="italic" font-size="17" textLength="15.5" lengthAdjust="spacingAndGlyphs" fill="#c8c8c8">fx</text>
<g fill="#c8c8c8">
<path d="M386.5 708V721H401.5V719.8H387.7V708Z"/>
<rect x="388.7" y="705.6" width="14.5" height="13"/>
</g>
<path d="M392.5 712H399.5" stroke="#1e1e1e" stroke-width="1.2"/>
<g fill="#444"><rect x="389.8" y="707" width="1.2" height="1.2"/><rect x="389.8" y="710" width="1.2" height="1.2"/><rect x="389.8" y="713" width="1.2" height="1.2"/><rect x="389.8" y="716" width="1.2" height="1.2"/><rect x="401" y="707" width="1.2" height="1.2"/><rect x="401" y="710" width="1.2" height="1.2"/><rect x="401" y="713" width="1.2" height="1.2"/><rect x="401" y="716" width="1.2" height="1.2"/></g>
<g stroke="#c4c4c4" stroke-width="1.2">
<circle cx="412.5" cy="716.2" r="5" fill="#1e1e1e"/>
<circle cx="414.8" cy="713.5" r="5" fill="#1e1e1e"/>
<circle cx="417.6" cy="710.8" r="5.2" fill="#6a6a6a"/>
</g>
<circle cx="435.2" cy="713" r="6.4" fill="#c8c8c8"/>
<path d="M439.7 708.5A6.4 6.4 0 0 0 430.7 717.5Z" fill="#1e1e1e"/>
<circle cx="435.2" cy="713" r="6.4" fill="none" stroke="#c8c8c8" stroke-width="1.3"/>
<g fill="none" stroke="#c8c8c8" stroke-width="1.3" stroke-linejoin="round">
<path d="M455.2 706.5L461 709.5V716.5L455.2 719.5L449.4 716.5V709.5Z"/>
<path d="M449.4 709.5L455.2 712.5L461 709.5M455.2 712.5V719.5"/>
</g>
</svg>

<!-- layer row icons -->
<svg style="left:0;top:0" width="1" height="1">
<path d="M2.2 735L7.3 740.6L12.5 735" fill="none" stroke="#cfcfcf" stroke-width="2"/>
<path d="M92.6 730L94.4 735.3H100L95.5 738.6L97.2 744L92.6 740.7L88 744L89.7 738.6L85.2 735.3H90.8Z" fill="#cfcfcf"/>
<g fill="#111">
<rect x="307" y="728" width="16.8" height="16.2" rx="2"/>
<rect x="347.2" y="728" width="16.1" height="16.2" rx="2"/>
<rect x="367" y="728" width="15.8" height="16.2" rx="2"/>
<rect x="406.5" y="728" width="16.2" height="16.2" rx="2"/>
<rect x="426.4" y="728" width="16.1" height="16.2" rx="2"/>
<rect x="446.2" y="728" width="16.4" height="16.2" rx="2"/>
</g>
<rect x="327.1" y="728" width="16.7" height="16.2" rx="2" fill="#3a3a3a"/>
<rect x="327.2" y="728.2" width="16.3" height="16.1" rx="2" fill="#3a3a3a" stroke="#2a2a2a" stroke-width="0.8"/>
<g fill="#d0d0d0">
<path d="M309.5 737.5V735.3A6.2 6.2 0 0 1 321.9 735.3V737.5Z"/>
<rect x="314.2" y="736" width="2.8" height="5.8" rx="1"/>
<rect x="307.8" y="738" width="5.3" height="2.2"/><rect x="318.3" y="738" width="5.3" height="2.2"/>
</g>
<circle cx="313.2" cy="733.3" r="1.5" fill="#111"/><circle cx="318" cy="733.3" r="1.5" fill="#111"/>
<g stroke="#707070" stroke-width="1.1" fill="none">
<circle cx="335.4" cy="736.2" r="2.2"/>
<path d="M335.4 730V733M335.4 739.4V742.4M329.2 736.2H332.2M338.6 736.2H341.6M331 731.8L333 733.8M337.8 738.6L339.8 740.6M339.8 731.8L337.8 733.8M333 738.6L331 740.6"/>
</g>
<path d="M349.5 742.5L361 730" stroke="#d0d0d0" stroke-width="1.6"/>
<text x="366.8" y="741.8" font-family="Liberation Sans" font-style="italic" font-size="17" textLength="15.5" lengthAdjust="spacingAndGlyphs" fill="#d0d0d0">fx</text>
<path transform="translate(501.2 737) scale(1.05)" d="M2.96 -6.34 L3.99 -5.63 L4.87 -4.76 L5.56 -3.76 L6.05 -2.66 L6.34 -1.51 L6.41 -0.34 L6.27 0.80 L5.94 1.88 L5.42 2.87 L4.74 3.73 L3.93 4.45 L3.02 5.00 L2.04 5.37 L1.03 5.55 L0.02 5.55 L-0.96 5.37 L-1.87 5.02 L-2.69 4.52 L-3.39 3.89 L-3.96 3.16 L-4.38 2.35 L-4.64 1.50 L-4.73 0.64 L-4.67 -0.22 L-4.47 -1.03 L-4.12 -1.78 L-3.65 -2.43 L-3.09 -2.98 L-2.45 -3.41 L-1.76 -3.70 L-1.04 -3.87 L-0.32 -3.89 L0.37 -3.79 L1.02 -3.57 L1.60 -3.25 L2.09 -2.83 L2.50 -2.34 L2.80 -1.80 L2.98 -1.24 L3.06 -0.66 L3.04 -0.10 L2.91 0.43 L2.69 0.91 L2.40 1.33 L2.05 1.68 L1.65 1.95 L1.23 2.13 L0.79 2.22 L0.37 2.23 L-0.04 2.17 L-0.41 2.03 L-0.73 1.83 L-0.99 1.59 L-1.20 1.32 L-1.34 1.02 L-1.41 0.72 L-1.43 0.43 L-1.38 0.16 L-1.29 -0.09 L-1.16 -0.29" fill="none" stroke="#c0c0c0" stroke-width="1.5"/>
<path d="M612 733.8L617.8 739.2L623.6 733.8" fill="none" stroke="#e0e0e0" stroke-width="2.2"/>
</svg>

<!-- property icons -->
<svg style="left:0;top:0" width="1" height="1">
<g fill="none" stroke="#cfcfcf" stroke-width="2.1">
<path d="M24.8 756.6L29.6 761.3L24.8 766"/>
<path d="M24.6 779L29.6 783.7L24.6 788.5"/>
<path d="M24.2 802.5L30 808.2L35.8 802.5"/>
</g>
<g fill="none" stroke="#c8c8c8" stroke-width="1.4" id="sw">
<circle cx="72.7" cy="829.2" r="6.3"/>
<path d="M70.2 820.3H75.2M72.7 820.3V822.9M66.8 822.8L68.3 824.3"/>
<circle cx="72.7" cy="851.8" r="6.3"/>
<path d="M70.2 842.9H75.2M72.7 842.9V845.5M66.8 845.4L68.3 846.9"/>
<circle cx="72.7" cy="874.4" r="6.3"/>
<path d="M70.2 865.5H75.2M72.7 865.5V868.1M66.8 868L68.3 869.5"/>
<circle cx="72.7" cy="897" r="6.3"/>
<path d="M70.2 888.1H75.2M72.7 888.1V890.7M66.8 890.6L68.3 892.1"/>
<circle cx="72.7" cy="919.6" r="6.3"/>
<path d="M70.2 910.7H75.2M72.7 910.7V913.3M66.8 913.2L68.3 914.7"/>
</g>
<path transform="translate(517.8 827.0) scale(1.12)" d="M2.96 -6.34 L3.99 -5.63 L4.87 -4.76 L5.56 -3.76 L6.05 -2.66 L6.34 -1.51 L6.41 -0.34 L6.27 0.80 L5.94 1.88 L5.42 2.87 L4.74 3.73 L3.93 4.45 L3.02 5.00 L2.04 5.37 L1.03 5.55 L0.02 5.55 L-0.96 5.37 L-1.87 5.02 L-2.69 4.52 L-3.39 3.89 L-3.96 3.16 L-4.38 2.35 L-4.64 1.50 L-4.73 0.64 L-4.67 -0.22 L-4.47 -1.03 L-4.12 -1.78 L-3.65 -2.43 L-3.09 -2.98 L-2.45 -3.41 L-1.76 -3.70 L-1.04 -3.87 L-0.32 -3.89 L0.37 -3.79 L1.02 -3.57 L1.60 -3.25 L2.09 -2.83 L2.50 -2.34 L2.80 -1.80 L2.98 -1.24 L3.06 -0.66 L3.04 -0.10 L2.91 0.43 L2.69 0.91 L2.40 1.33 L2.05 1.68 L1.65 1.95 L1.23 2.13 L0.79 2.22 L0.37 2.23 L-0.04 2.17 L-0.41 2.03 L-0.73 1.83 L-0.99 1.59 L-1.20 1.32 L-1.34 1.02 L-1.41 0.72 L-1.43 0.43 L-1.38 0.16 L-1.29 -0.09 L-1.16 -0.29" fill="none" stroke="#c4c4c4" stroke-width="1.35"/>
<path transform="translate(517.8 849.6) scale(1.12)" d="M2.96 -6.34 L3.99 -5.63 L4.87 -4.76 L5.56 -3.76 L6.05 -2.66 L6.34 -1.51 L6.41 -0.34 L6.27 0.80 L5.94 1.88 L5.42 2.87 L4.74 3.73 L3.93 4.45 L3.02 5.00 L2.04 5.37 L1.03 5.55 L0.02 5.55 L-0.96 5.37 L-1.87 5.02 L-2.69 4.52 L-3.39 3.89 L-3.96 3.16 L-4.38 2.35 L-4.64 1.50 L-4.73 0.64 L-4.67 -0.22 L-4.47 -1.03 L-4.12 -1.78 L-3.65 -2.43 L-3.09 -2.98 L-2.45 -3.41 L-1.76 -3.70 L-1.04 -3.87 L-0.32 -3.89 L0.37 -3.79 L1.02 -3.57 L1.60 -3.25 L2.09 -2.83 L2.50 -2.34 L2.80 -1.80 L2.98 -1.24 L3.06 -0.66 L3.04 -0.10 L2.91 0.43 L2.69 0.91 L2.40 1.33 L2.05 1.68 L1.65 1.95 L1.23 2.13 L0.79 2.22 L0.37 2.23 L-0.04 2.17 L-0.41 2.03 L-0.73 1.83 L-0.99 1.59 L-1.20 1.32 L-1.34 1.02 L-1.41 0.72 L-1.43 0.43 L-1.38 0.16 L-1.29 -0.09 L-1.16 -0.29" fill="none" stroke="#c4c4c4" stroke-width="1.35"/>
<path transform="translate(517.8 872.2) scale(1.12)" d="M2.96 -6.34 L3.99 -5.63 L4.87 -4.76 L5.56 -3.76 L6.05 -2.66 L6.34 -1.51 L6.41 -0.34 L6.27 0.80 L5.94 1.88 L5.42 2.87 L4.74 3.73 L3.93 4.45 L3.02 5.00 L2.04 5.37 L1.03 5.55 L0.02 5.55 L-0.96 5.37 L-1.87 5.02 L-2.69 4.52 L-3.39 3.89 L-3.96 3.16 L-4.38 2.35 L-4.64 1.50 L-4.73 0.64 L-4.67 -0.22 L-4.47 -1.03 L-4.12 -1.78 L-3.65 -2.43 L-3.09 -2.98 L-2.45 -3.41 L-1.76 -3.70 L-1.04 -3.87 L-0.32 -3.89 L0.37 -3.79 L1.02 -3.57 L1.60 -3.25 L2.09 -2.83 L2.50 -2.34 L2.80 -1.80 L2.98 -1.24 L3.06 -0.66 L3.04 -0.10 L2.91 0.43 L2.69 0.91 L2.40 1.33 L2.05 1.68 L1.65 1.95 L1.23 2.13 L0.79 2.22 L0.37 2.23 L-0.04 2.17 L-0.41 2.03 L-0.73 1.83 L-0.99 1.59 L-1.20 1.32 L-1.34 1.02 L-1.41 0.72 L-1.43 0.43 L-1.38 0.16 L-1.29 -0.09 L-1.16 -0.29" fill="none" stroke="#c4c4c4" stroke-width="1.35"/>
<path transform="translate(517.8 894.8) scale(1.12)" d="M2.96 -6.34 L3.99 -5.63 L4.87 -4.76 L5.56 -3.76 L6.05 -2.66 L6.34 -1.51 L6.41 -0.34 L6.27 0.80 L5.94 1.88 L5.42 2.87 L4.74 3.73 L3.93 4.45 L3.02 5.00 L2.04 5.37 L1.03 5.55 L0.02 5.55 L-0.96 5.37 L-1.87 5.02 L-2.69 4.52 L-3.39 3.89 L-3.96 3.16 L-4.38 2.35 L-4.64 1.50 L-4.73 0.64 L-4.67 -0.22 L-4.47 -1.03 L-4.12 -1.78 L-3.65 -2.43 L-3.09 -2.98 L-2.45 -3.41 L-1.76 -3.70 L-1.04 -3.87 L-0.32 -3.89 L0.37 -3.79 L1.02 -3.57 L1.60 -3.25 L2.09 -2.83 L2.50 -2.34 L2.80 -1.80 L2.98 -1.24 L3.06 -0.66 L3.04 -0.10 L2.91 0.43 L2.69 0.91 L2.40 1.33 L2.05 1.68 L1.65 1.95 L1.23 2.13 L0.79 2.22 L0.37 2.23 L-0.04 2.17 L-0.41 2.03 L-0.73 1.83 L-0.99 1.59 L-1.20 1.32 L-1.34 1.02 L-1.41 0.72 L-1.43 0.43 L-1.38 0.16 L-1.29 -0.09 L-1.16 -0.29" fill="none" stroke="#c4c4c4" stroke-width="1.35"/>
<path transform="translate(517.8 917.4) scale(1.12)" d="M2.96 -6.34 L3.99 -5.63 L4.87 -4.76 L5.56 -3.76 L6.05 -2.66 L6.34 -1.51 L6.41 -0.34 L6.27 0.80 L5.94 1.88 L5.42 2.87 L4.74 3.73 L3.93 4.45 L3.02 5.00 L2.04 5.37 L1.03 5.55 L0.02 5.55 L-0.96 5.37 L-1.87 5.02 L-2.69 4.52 L-3.39 3.89 L-3.96 3.16 L-4.38 2.35 L-4.64 1.50 L-4.73 0.64 L-4.67 -0.22 L-4.47 -1.03 L-4.12 -1.78 L-3.65 -2.43 L-3.09 -2.98 L-2.45 -3.41 L-1.76 -3.70 L-1.04 -3.87 L-0.32 -3.89 L0.37 -3.79 L1.02 -3.57 L1.60 -3.25 L2.09 -2.83 L2.50 -2.34 L2.80 -1.80 L2.98 -1.24 L3.06 -0.66 L3.04 -0.10 L2.91 0.43 L2.69 0.91 L2.40 1.33 L2.05 1.68 L1.65 1.95 L1.23 2.13 L0.79 2.22 L0.37 2.23 L-0.04 2.17 L-0.41 2.03 L-0.73 1.83 L-0.99 1.59 L-1.20 1.32 L-1.34 1.02 L-1.41 0.72 L-1.43 0.43 L-1.38 0.16 L-1.29 -0.09 L-1.16 -0.29" fill="none" stroke="#c4c4c4" stroke-width="1.35"/>

<rect x="304.5" y="865.5" width="20" height="13" fill="#141414"/>
<g fill="none" stroke="#d4d4d4" stroke-width="1.9" stroke-linecap="round">
<path d="M314.2 868.8H309.8A3.1 3.1 0 0 0 309.8 875H312.2"/>
<path d="M315.2 875H319.6A3.1 3.1 0 0 0 319.6 868.8H317.2"/>
<path d="M311.8 871.9H317.6"/>
</g>
<circle cx="472.2" cy="759.5" r="7" fill="#d0d0d0"/>
<path d="M470 755.6L476 759.5L470 763.4Z" fill="#1e1e1e"/>
</svg>


</body></html>
